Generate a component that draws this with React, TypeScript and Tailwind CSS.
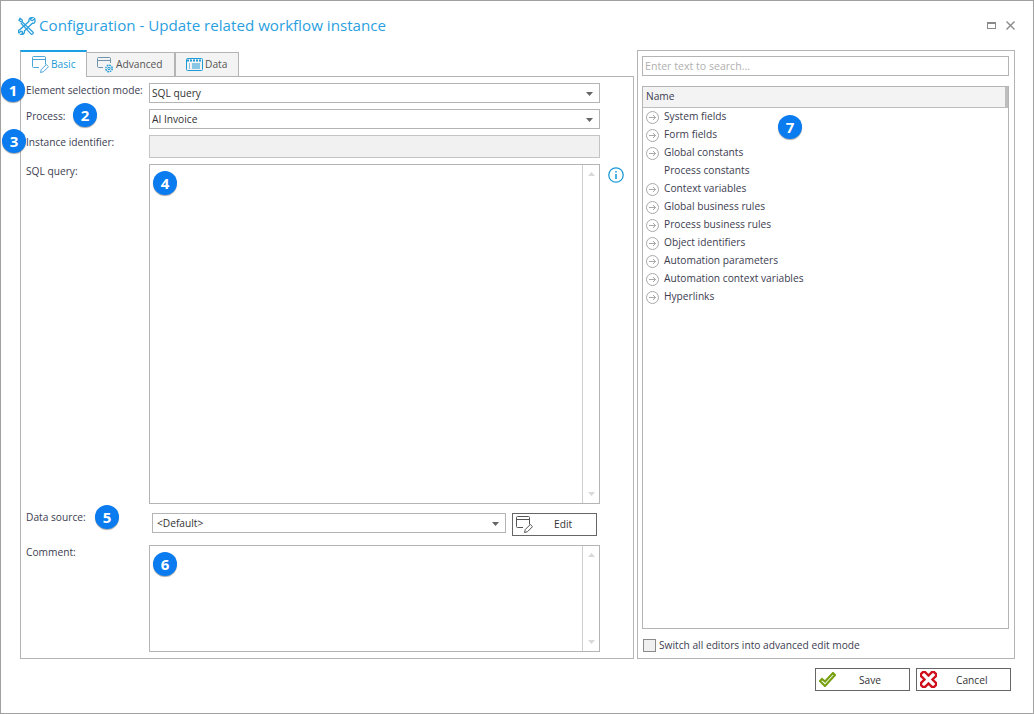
import { ReactNode } from 'react'

const FONT = { fontFamily: '"Open Sans", "Noto Sans", sans-serif' }

function Badge({ n, className }: { n: number; className: string }) {
  return (
    <div className={`absolute w-[24px] h-[24px] rounded-full bg-[#0a7cf0] text-white text-[15px] font-bold flex items-center justify-center shadow-[0_1px_1px_rgba(0,0,0,0.35)] ${className}`}>
      {n}
    </div>
  )
}

function Caret() {
  return (
    <svg width="7" height="4" viewBox="0 0 7 4" className="shrink-0">
      <path d="M0 0h7L3.5 4z" fill="#666" />
    </svg>
  )
}

function Select({ value, className }: { value: string; className: string }) {
  return (
    <div className={`flex items-center justify-between border border-[#b4b4b4] bg-white pr-[6px] pt-px text-[#333] ${className}`}>
      <span>{value}</span>
      <Caret />
    </div>
  )
}

function TextArea({ className, badge }: { className: string; badge: number }) {
  return (
    <div className={`relative flex border border-[#b4b4b4] bg-white ${className}`}>
      <div className="flex-1" />
      <div className="w-[17px] border-l border-[#cfcfcf] flex flex-col items-center justify-between py-[7px]">
        <svg width="7" height="4" viewBox="0 0 7 4"><path d="M0 4h7L3.5 0z" fill="#d8d8d8" /></svg>
        <svg width="7" height="4" viewBox="0 0 7 4"><path d="M0 0h7L3.5 4z" fill="#d8d8d8" /></svg>
      </div>
      <Badge n={badge} className="left-[3px] top-[6px]" />
    </div>
  )
}

function FormRow({ label, children, className, labelClass }: { label: string; children: ReactNode; className?: string; labelClass?: string }) {
  return (
    <div className={`flex ${className ?? ''}`}>
      <div className={`w-[123px] shrink-0 text-[#3c3c50] leading-[14px] ${labelClass ?? ''}`}>{label}</div>
      {children}
    </div>
  )
}

function WindowEditIcon({ color, pencil }: { color: string; pencil: string }) {
  return (
    <svg width="17" height="17" viewBox="0 0 17 17" fill="none" stroke={color} strokeWidth="1" className="shrink-0">
      <path d="M13.5 8.5V1.5a1 1 0 0 0-1-1h-11a1 1 0 0 0-1 1v9a1 1 0 0 0 1 1H7" />
      <path d="M.5 3.5h13" />
      <path d="M8.5 16.5l.8-3 5-5 2.2 2.2-5 5z" stroke={pencil} />
    </svg>
  )
}

function AdvancedIcon() {
  return (
    <svg width="17" height="16" viewBox="0 0 17 16" fill="none" stroke="#1e9bd7" strokeWidth="1" className="shrink-0">
      <path d="M13.5 6V1.5a1 1 0 0 0-1-1h-11a1 1 0 0 0-1 1v8a1 1 0 0 0 1 1H6" stroke="#6d93ad" />
      <path d="M.5 3.5h13" stroke="#6d93ad" />
      <circle cx="12" cy="11.5" r="3.2" strokeWidth="1.5" strokeDasharray="1.6 .9" />
      <circle cx="12" cy="11.5" r="1.2" />
    </svg>
  )
}

function DataIcon() {
  return (
    <svg width="17" height="13" viewBox="0 0 17 13" fill="none" stroke="#1e9bd7" strokeWidth="1" className="shrink-0">
      <rect x=".5" y=".5" width="16" height="12" rx="1" />
      <path d="M1 2.5h15" strokeWidth="2" strokeDasharray="2 1" />
      <path d="M3 6h1M3 8h1M3 10h1M6 6h8M6 8h8M6 10h8" />
    </svg>
  )
}

function ToolsIcon() {
  return (
    <svg width="18" height="18" viewBox="0 0 18 18" fill="none" stroke="#2b9fdc" strokeWidth="1.3" className="shrink-0">
      <path d="M2 1.2 4.2 3v1.2L3.2 5 1 3.4z" />
      <path d="M4 4.6 15 15.2a1.4 1.4 0 0 1-1.9 1.9L2.9 6" />
      <path d="M16.6 1.6 14.6 3.6 13 3.2 12.6 1.6 14.4.6C12 .4 10.6 2 11 4.2L2 12.6C.2 12.6.2 15 1 16l1.7-1.7 1.6.4.4 1.5L3 17.4c2.4.4 3.8-1.2 3.4-3.4l8-7.8c2 .6 3.4-1.8 2.2-4.6z" />
    </svg>
  )
}

function TreeRow({ label, arrow = true }: { label: string; arrow?: boolean }) {
  return (
    <div className="h-[18px] flex items-center pl-[3px] text-[#3c3c50]">
      <div className="w-[18px] shrink-0 flex">
        {arrow && (
          <svg width="13" height="13" viewBox="0 0 13 13" fill="none" stroke="#a8a8a8" strokeWidth="1">
            <circle cx="6.5" cy="6.5" r="6" />
            <path d="M3 6.5h6.5M7 4l2.5 2.5L7 9" />
          </svg>
        )}
      </div>
      {label}
    </div>
  )
}

const TREE = [
  'System fields',
  'Form fields',
  'Global constants',
  'Process constants',
  'Context variables',
  'Global business rules',
  'Process business rules',
  'Object identifiers',
  'Automation parameters',
  'Automation context variables',
  'Hyperlinks',
]

export default function App() {
  return (
    <div style={FONT} className="relative w-[1034px] h-[714px] bg-white border border-[#a0a0a0] text-[10.2px] overflow-hidden">
      {/* Title bar */}
      <div className="flex items-center h-[49px] pl-[17px] pr-[18px]">
        <ToolsIcon />
        <div className="ml-[3px] text-[15.15px] text-[#2a9fe0] whitespace-nowrap">Configuration - Update related workflow instance</div>
        <div className="ml-auto flex items-center gap-[10px]">
          <div className="w-[9px] h-[7px] border border-[#8a8a8a] border-t-2" />
          <svg width="9" height="9" viewBox="0 0 9 9" stroke="#8a8a8a" strokeWidth="1.4"><path d="M.5.5l8 8M8.5.5l-8 8" /></svg>
        </div>
      </div>

      <div className="flex pl-[19px] gap-[3px]">
        {/* Left side */}
        <div className="w-[614px]">
          <div className="flex h-[26px] items-end">
            <div className="relative z-10 w-[67px] h-[27px] -mb-px bg-white border-x border-[#b4b4b4] border-t-2 border-t-[#1ba1e2] flex items-center pl-[11px] gap-[2px] text-[#1e9bd7]">
              <WindowEditIcon color="#4da6d9" pencil="#4da6d9" />
              Basic
            </div>
            <div className="w-[88px] h-[24px] bg-[#f3f3f3] border border-l-0 border-b-0 border-[#b4b4b4] flex items-center pl-[10px] gap-[2px] text-[#555]">
              <AdvancedIcon />
              Advanced
            </div>
            <div className="w-[64px] h-[24px] bg-[#f3f3f3] border border-b-0 border-[#b4b4b4] flex items-center pl-[10px] gap-[2px] text-[#555]">
              <DataIcon />
              Data
            </div>
          </div>
          <div className="h-[583px] border border-[#b4b4b4] pt-[6px] pl-[5px] flex flex-col">
            <FormRow label="Element selection mode:" className="h-[20px] mb-[6px]">
              <Select value="SQL query" className="w-[451px] h-[20px] pl-[2px]" />
            </FormRow>
            <FormRow label="Process:" className="h-[20px] mb-[6px]">
              <Select value="AI Invoice" className="w-[451px] h-[20px] pl-[2px]" />
            </FormRow>
            <FormRow label="Instance identifier:" className="h-[23px] mb-[6px]">
              <div className="w-[451px] h-[23px] bg-[#f1f1f1] border border-[#c4c4c4]" />
            </FormRow>
            <FormRow label="SQL query:" className="h-[340px] mb-[9px]">
              <TextArea className="w-[451px] h-[340px]" badge={4} />
              <svg width="16" height="16" viewBox="0 0 16 16" fill="none" stroke="#1e9bd7" strokeWidth="1.3" className="ml-[8px] mt-[3px]">
                <circle cx="8" cy="8" r="7.2" />
                <path d="M8 7v5M8 4v1.6" strokeWidth="1.6" />
              </svg>
            </FormRow>
            <FormRow label="Data source:" className="h-[23px] mb-[9px]" labelClass="-mt-[3px]">
              <Select value="<Default>" className="ml-[3px] w-[354px] h-[20px] pl-[4px]" />
              <div className="ml-[6px] w-[85px] h-[23px] border border-[#666] flex items-center pl-[3px] relative text-[#333]">
                <WindowEditIcon color="#555" pencil="#555" />
                <span className="absolute left-[41px]">Edit</span>
              </div>
            </FormRow>
            <FormRow label="Comment:" className="h-[107px]">
              <TextArea className="w-[451px] h-[107px]" badge={6} />
            </FormRow>
          </div>
        </div>

        {/* Right side */}
        <div className="w-[378px] h-[609px] border border-[#b4b4b4] pt-[5px] pl-[4px] flex flex-col">
          <div className="w-[367px] h-[20px] border border-[#b4b4b4] flex items-center pl-[2px] pt-px text-[#b0b0b0] text-[10.6px]">Enter text to search...</div>
          <div className="relative mt-[10px] w-[367px] h-[543px] border border-[#b4b4b4] flex flex-col">
            <div className="h-[21px] bg-[#f3f3f3] border-b border-r-[3px] border-[#bdbdbd] flex items-center pl-[3px] text-[#3c3c50]">Name</div>
            {TREE.map((t) => (
              <TreeRow key={t} label={t} arrow={t !== 'Process constants'} />
            ))}
            <Badge n={7} className="left-[135px] top-[28px]" />
          </div>
          <div className="mt-[9px] ml-px flex items-center gap-[3px] text-[#3c3c50]">
            <div className="w-[13px] h-[13px] border border-[#8a8a8a] bg-[#f0f0f0]" />
            Switch all editors into advanced edit mode
          </div>
        </div>
      </div>

      {/* Footer buttons */}
      <div className="flex justify-end gap-[6px] pr-[22px] mt-[9px]">
        <div className="relative w-[95px] h-[23px] border border-[#666] flex items-center pl-[3px] text-[#333]">
          <svg width="17" height="15" viewBox="0 0 17 15" fill="none" stroke="#76a00f" strokeWidth="2.1">
            <path d="M1 9l2-2 3 2.5L14 1l2 2L6 14z" />
          </svg>
          <span className="absolute left-[43px] top-[4px]">Save</span>
        </div>
        <div className="relative w-[95px] h-[23px] border border-[#666] flex items-center pl-[3px] text-[#333]">
          <svg width="17" height="17" viewBox="0 0 17 17" fill="none" stroke="#d0101c" strokeWidth="2.4">
            <path d="M3 1l2 0 3.5 3.5L12 1h2l2 2v2l-3.5 3.5L16 12v2l-2 2h-2l-3.5-3.5L5 16H3l-2-2v-2l3.5-3.5L1 5V3z" />
          </svg>
          <span className="absolute left-[39px] top-[4px]">Cancel</span>
        </div>
      </div>

      <Badge n={1} className="left-[0px] top-[77px]" />
      <Badge n={2} className="left-[72px] top-[102px]" />
      <Badge n={3} className="left-[1px] top-[128px]" />
      <Badge n={5} className="left-[94px] top-[504px]" />
    </div>
  )
}
